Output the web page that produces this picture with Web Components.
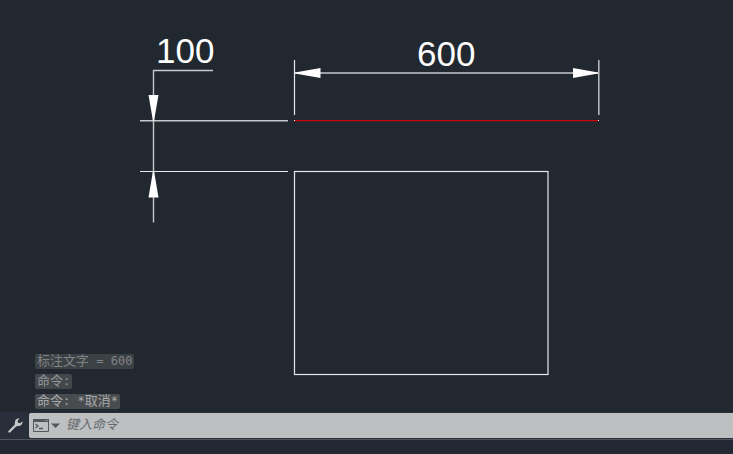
<!DOCTYPE html>
<html lang="zh-CN">
<head>
    <meta charset="UTF-8">
    <meta name="viewport" content="width=device-width, initial-scale=1">
    <title>CAD</title>
    <style>
        html,
        body {
            height: 100%;
            margin: 0;
        }

        body {
            background: #222830;
            font-family: "DejaVu Sans Mono", "Noto Sans CJK SC", monospace;
        }
    </style>
</head>
<body>
    <cad-workspace>
        <cad-drawing></cad-drawing>
        <command-history slot="history">
            <history-line color="#808386" background="#3c4145"><span>标注文字</span> = 600</history-line>
            <history-line color="#929597" background="#42474b"><span>命令</span>:</history-line>
            <history-line color="#a7aaab" background="#484c4f"><span>命令</span>: *<span>取消</span>*</history-line>
        </command-history>
        <command-line slot="command" text="键入命令"></command-line>
    </cad-workspace>

    <script>
        class CadWorkspace extends HTMLElement {
            constructor() {
                super();
                this.attachShadow({ mode: 'open' });
                this.shadowRoot.innerHTML = `
        <style>
        :host {
            display: flex;
            flex-direction: column;
            height: 100%;
            overflow: hidden;
        }

        .view {
            display: grid;
            flex: 1;
            min-height: 0;
        }

        /* the history lies over the drawing, in the same grid cell */
        .view > * {
            grid-area: 1 / 1;
            min-width: 0;
            min-height: 0;
        }

        .history {
            place-self: end start;
            padding: 0 0 3px 35px;
        }

        .status {
            height: 14px;
            border-top: 1px solid #50555b;
            background: #232934;
        }
        </style>
        <div class="view">
            <slot></slot>
            <div class="history"><slot name="history"></slot></div>
        </div>
        <slot name="command"></slot>
        <div class="status"></div>
        `;
            }
        }
        customElements.define('cad-workspace', CadWorkspace);


        class CadDrawing extends HTMLElement {
            constructor() {
                super();
                this.attachShadow({ mode: 'open' });
                this.shadowRoot.innerHTML = `
        <style>
        :host {
            display: block;
            grid-area: 1 / 1;
            min-height: 0;
            overflow: hidden;
        }

        svg {
            display: block;
            width: 100%;
            height: 100%;
        }

        .line {
            fill: none;
            stroke: #e6e8ea;
            stroke-width: 1.2;
        }

        .soft {
            fill: none;
            stroke: #c6c9cc;
            stroke-width: 1.4;
        }

        .arrow {
            fill: #fff;
        }

        .red {
            stroke: #cc0509;
            stroke-width: 1.3;
        }

        text {
            fill: #fff;
            font: 35px "Liberation Sans", sans-serif;
        }
        </style>
        <svg role="img" aria-label="100 × 600">
            <!-- vertical dimension -->
            <path class="soft" d="M213 70.500H153.500V222.500"/>
            <path class="soft" d="M140 120.800H288"/>
            <path class="line" d="M140 171.500H288"/>
            <path class="arrow" d="M148.500 95H158.500L154 121H153Z"/>
            <path class="arrow" d="M148.500 197.500H158.500L154 171H153Z"/>
            <text x="156" y="63">100</text>

            <!-- horizontal dimension -->
            <path class="line" d="M294.500 60V115"/>
            <path class="soft" d="M598.800 60V115"/>
            <path class="soft" d="M295 73H598"/>
            <path class="arrow" d="M295 72.500L320.500 68V78L295 73.500Z"/>
            <path class="arrow" d="M598 72.500L573 68V78L598 73.500Z"/>
            <text x="417" y="66">600</text>

            <!-- objects -->
            <path class="red" d="M295 120.700H598"/>
            <path class="arrow" d="M294 120h1v1h-1zM598 120h1v1h-1z"/>
            <rect class="line" x="294.500" y="171.500" width="253.500" height="203"/>
        </svg>
        `;
            }
        }
        customElements.define('cad-drawing', CadDrawing);


        class CommandHistory extends HTMLElement {
            constructor() {
                super();
                this.attachShadow({ mode: 'open' });
                this.shadowRoot.innerHTML = `
        <style>
        :host {
            display: flex;
            flex-direction: column;
            align-items: flex-start;
            gap: 5px;
        }
        </style>
        <slot></slot>
        `;
            }
        }
        customElements.define('command-history', CommandHistory);


        class HistoryLine extends HTMLElement {
            constructor() {
                super();
                this.attachShadow({ mode: 'open' });
                this.shadowRoot.innerHTML = `
        <style>
        :host {
            display: block;
            padding: 0 2px;
            border-radius: 2px;
            font-size: 12px;
            line-height: 15px;
            height: 15px;
            white-space: nowrap;
        }

        ::slotted(span) {
            font-size: 13px;
            line-height: 1;
        }
        </style>
        <slot></slot>
        `;
            }

            connectedCallback() {
                this.render();
            }

            render() {
                this.style.color = this.getAttribute('color') || '#a7aaab';
                this.style.background = this.getAttribute('background') || '#484c4f';
            }
        }
        customElements.define('history-line', HistoryLine);


        class CommandLine extends HTMLElement {
            constructor() {
                super();
                this.attachShadow({ mode: 'open' });
                this.shadowRoot.innerHTML = `
        <style>
        :host {
            display: block;
            background: #292e3b;
        }

        .bar {
            display: flex;
            height: 25px;
            padding: 1px 0;
        }

        button {
            display: flex;
            align-items: center;
            padding: 0;
            border: 0;
            background: none;
        }

        .custom {
            width: 29px;
            padding-left: 8px;
        }

        .field {
            display: flex;
            flex: 1;
            min-width: 0;
            border-radius: 2px 0 0 2px;
            background: #bdbfc1;
        }

        .recent {
            gap: 2px;
            padding-left: 4px;
        }

        input {
            flex: 1;
            min-width: 0;
            padding: 0 0 2px 6px;
            border: 0;
            outline: 0;
            background: none;
            color: #33373b;
            font: italic 13px "DejaVu Sans Mono", "Noto Sans CJK SC", monospace;
        }

        input::placeholder {
            color: #65686b;
            opacity: 1;
        }
        </style>
        <div class="bar">
            <button class="custom" type="button" aria-label="自定义">
                <svg width="15" height="15" viewBox="0 0 15 15">
                    <path d="M1.500 13.500L8.500 6.500" stroke="#c5c8ca" stroke-width="2.400" stroke-linecap="round"/>
                    <path d="M11.600 .6L9.700 2.700L10 4.800L12.200 5.200L14.300 3.300C14.900 5.800 13.400 7.900 10.900 7.900L8.600 8.300L6.600 6.300L7 4C7 1.600 9 0 11.600 .6Z" fill="#c5c8ca"/>
                </svg>
            </button>
            <div class="field">
                <button class="recent" type="button" aria-label="最近使用的命令">
                    <svg width="16" height="13" viewBox="0 0 16 13">
                        <path d="M.5 .5H15.500V12.500H.5Z" fill="none" stroke="#54575a"/>
                        <path d="M0 0H16V3H0Z" fill="#54575a"/>
                        <path d="M12 1h1v1h-1zM14 1h1v1h-1z" fill="#a0a2a4"/>
                        <path d="M2.500 5L5 7L2.500 9M6 9.500H10" fill="none" stroke="#54575a" stroke-width="1.300"/>
                    </svg>
                    <svg width="9" height="5" viewBox="0 0 9 5">
                        <path d="M0 .5H9L4.500 5Z" fill="#54575a"/>
                    </svg>
                </button>
                <input type="text" aria-label="命令">
            </div>
        </div>
        `;
            }

            connectedCallback() {
                this.render();
            }

            render() {
                this.shadowRoot.querySelector('input').placeholder = this.getAttribute('text') || '';
            }
        }
        customElements.define('command-line', CommandLine);
    </script>
</body>
</html>
